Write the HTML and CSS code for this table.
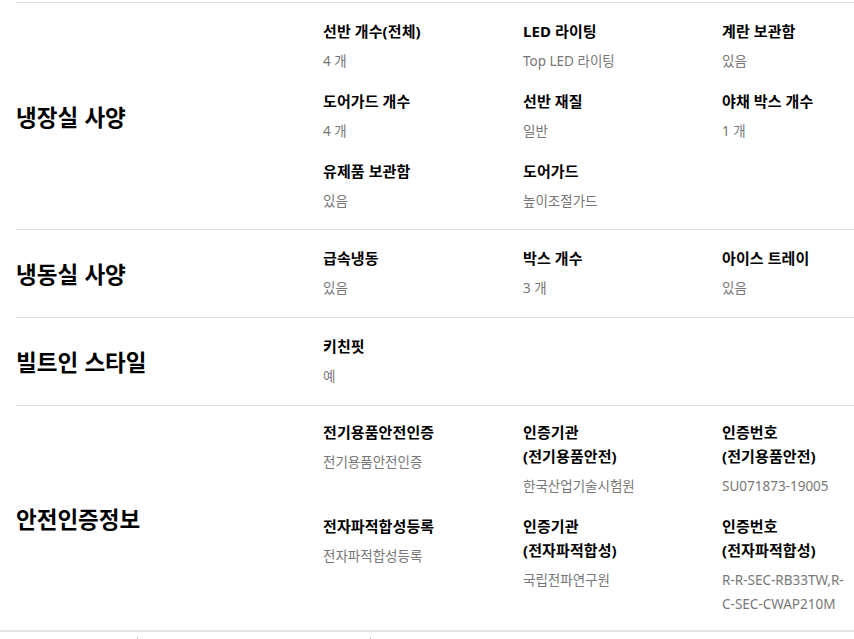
FILE: index.html
```html
<!DOCTYPE html>
<html lang="ko">
<head>
    <meta charset="UTF-8">
    <meta name="viewport" content="width=device-width, initial-scale=1.0">
    <title>제품 사양</title>
    <link rel="stylesheet" href="styles.css">
</head>
<body>

<div class="spec-list">
    <!-- 냉장실 -->
    <div class="spec-section">
        <h3 class="spec-title">냉장실 사양</h3>
        <ul class="spec-items">
            <li><p class="spec-name">선반 개수(전체)</p><p class="spec-value">4 개</p></li>
            <li><p class="spec-name">LED 라이팅</p><p class="spec-value">Top LED 라이팅</p></li>
            <li><p class="spec-name">계란 보관함</p><p class="spec-value">있음</p></li>
            <li><p class="spec-name">도어가드 개수</p><p class="spec-value">4 개</p></li>
            <li><p class="spec-name">선반 재질</p><p class="spec-value">일반</p></li>
            <li><p class="spec-name">야채 박스 개수</p><p class="spec-value">1 개</p></li>
            <li><p class="spec-name">유제품 보관함</p><p class="spec-value">있음</p></li>
            <li><p class="spec-name">도어가드</p><p class="spec-value">높이조절가드</p></li>
        </ul>
    </div>

    <!-- 냉동실 -->
    <div class="spec-section">
        <h3 class="spec-title">냉동실 사양</h3>
        <ul class="spec-items">
            <li><p class="spec-name">급속냉동</p><p class="spec-value">있음</p></li>
            <li><p class="spec-name">박스 개수</p><p class="spec-value">3 개</p></li>
            <li><p class="spec-name">아이스 트레이</p><p class="spec-value">있음</p></li>
        </ul>
    </div>

    <div class="spec-section">
        <h3 class="spec-title">빌트인 스타일</h3>
        <ul class="spec-items">
            <li><p class="spec-name">키친핏</p><p class="spec-value">예</p></li>
        </ul>
    </div>

    <div class="spec-section last">
        <h3 class="spec-title">안전인증정보</h3>
        <ul class="spec-items">
            <li><p class="spec-name">전기용품안전인증</p><p class="spec-value">전기용품안전인증</p></li>
            <li><p class="spec-name">인증기관<br>(전기용품안전)</p><p class="spec-value">한국산업기술시험원</p></li>
            <li><p class="spec-name">인증번호<br>(전기용품안전)</p><p class="spec-value">SU071873-19005</p></li>
            <li><p class="spec-name">전자파적합성등록</p><p class="spec-value">전자파적합성등록</p></li>
            <li><p class="spec-name">인증기관<br>(전자파적합성)</p><p class="spec-value">국립전파연구원</p></li>
            <li><p class="spec-name">인증번호<br>(전자파적합성)</p><p class="spec-value">R-R-SEC-RB33TW,R-C-SEC-CWAP210M</p></li>
        </ul>
    </div>
</div>

<div class="tab-bar">
    <span class="tab"></span>
    <span class="tab"></span>
    <span class="tab"></span>
</div>

</body>
</html>
```

FILE: styles.css
```css
* { margin: 0; padding: 0; box-sizing: border-box; }
body {
    font-family: "Noto Sans", "Noto Sans CJK KR", sans-serif;
    color: #000; background: #fff;
}
ul { list-style: none; }

.spec-list { padding-top: 2px; margin-left: 16px; }
.spec-section {
    display: grid; grid-template-columns: 307px 1fr; align-items: center;
    border-top: 1px solid #ddd; padding: 16px 8px 16px 0;
}
.spec-section + .spec-section { padding-bottom: 17px; }
.spec-section.last { padding-top: 14px; padding-bottom: 14px; }
.spec-title {
    font-family: "Noto Sans CJK KR", sans-serif;
    font-size: 22.5px; font-weight: 700; line-height: 28px;
}
.spec-items {
    display: grid; grid-template-columns: 200px 199px minmax(0, 1fr);
    row-gap: 16px;
}
.spec-name {
    font-size: 15px; font-weight: 700; line-height: 24px; letter-spacing: 0.1px;
}
.spec-value {
    font-size: 13.5px; color: #777; line-height: 24px; margin-top: 6px;
}

.tab-bar {
    border-top: 2px solid #e4e4e4; height: 12px;
    display: flex; padding-top: 5px;
}
.tab { width: 233px; height: 4px; border-left: 1px solid #ccc; }
.tab:first-child { width: 137px; border-left: none; }
```
